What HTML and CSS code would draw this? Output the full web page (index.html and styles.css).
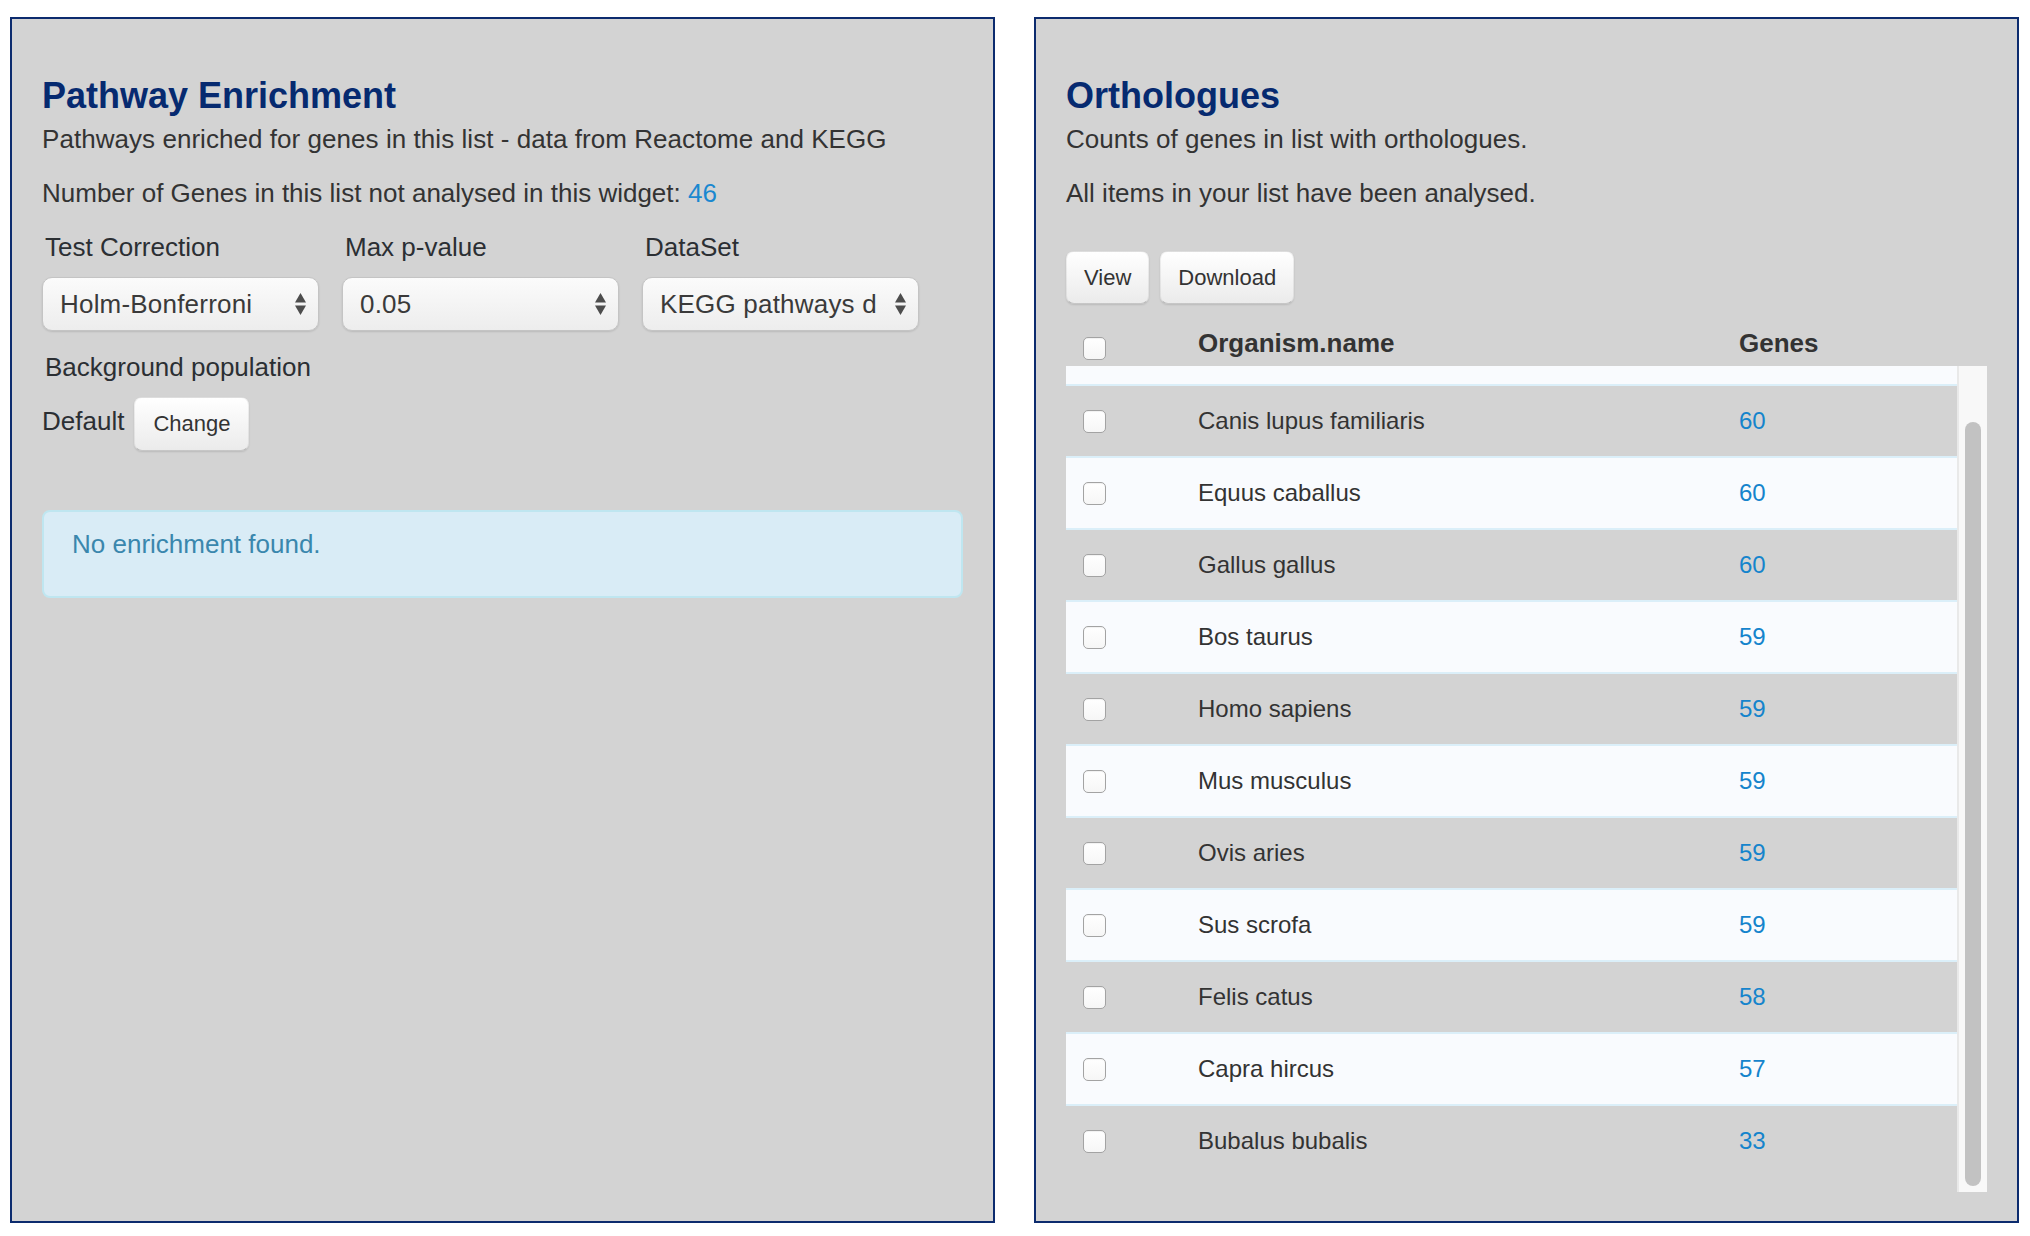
FILE: index.html
```html
<!DOCTYPE html>
<html lang="en">
<head>
<meta charset="utf-8">
<title>Widgets</title>
<link rel="stylesheet" href="styles.css">
</head>
<body>
<div class="page">
  <section class="panel">
    <h2 class="title">Pathway Enrichment</h2>
    <p class="desc">Pathways enriched for genes in this list - data from Reactome and KEGG</p>
    <p class="note">Number of Genes in this list not analysed in this widget: <a class="link" href="#">46</a></p>
    <div class="controls">
      <label class="ctl-label">Test Correction</label>
      <label class="ctl-label">Max p-value</label>
      <label class="ctl-label">DataSet</label>
      <div class="select"><span class="select-text">Holm-Bonferroni</span><svg class="arrows" width="11" height="22" viewBox="0 0 11 22"><polygon points="5.5,0 11,9.5 0,9.5"/><polygon points="0,12.5 11,12.5 5.5,22"/></svg></div>
      <div class="select"><span class="select-text">0.05</span><svg class="arrows" width="11" height="22" viewBox="0 0 11 22"><polygon points="5.5,0 11,9.5 0,9.5"/><polygon points="0,12.5 11,12.5 5.5,22"/></svg></div>
      <div class="select"><span class="select-text">KEGG pathways data set</span><svg class="arrows" width="11" height="22" viewBox="0 0 11 22"><polygon points="5.5,0 11,9.5 0,9.5"/><polygon points="0,12.5 11,12.5 5.5,22"/></svg></div>
    </div>
    <label class="ctl-label bg-label">Background population</label>
    <div class="bg-row">
      <span class="bg-default">Default</span>
      <button class="btn btn-change">Change</button>
    </div>
    <div class="alert">No enrichment found.</div>
  </section>

  <section class="panel">
    <h2 class="title">Orthologues</h2>
    <p class="desc">Counts of genes in list with orthologues.</p>
    <p class="note">All items in your list have been analysed.</p>
    <div class="btn-row">
      <button class="btn">View</button>
      <button class="btn">Download</button>
    </div>
    <div class="thead">
      <span class="cell-check"><span class="checkbox head-check"></span></span>
      <span class="th">Organism.name</span>
      <span class="th">Genes</span>
    </div>
    <div class="scroll">
      <div class="tbody">
        <div class="strip"></div>
        <div class="row"><span class="cell-check"><span class="checkbox"></span></span><span class="td">Canis lupus familiaris</span><a class="td num" href="#">60</a></div>
        <div class="row alt"><span class="cell-check"><span class="checkbox"></span></span><span class="td">Equus caballus</span><a class="td num" href="#">60</a></div>
        <div class="row"><span class="cell-check"><span class="checkbox"></span></span><span class="td">Gallus gallus</span><a class="td num" href="#">60</a></div>
        <div class="row alt"><span class="cell-check"><span class="checkbox"></span></span><span class="td">Bos taurus</span><a class="td num" href="#">59</a></div>
        <div class="row"><span class="cell-check"><span class="checkbox"></span></span><span class="td">Homo sapiens</span><a class="td num" href="#">59</a></div>
        <div class="row alt"><span class="cell-check"><span class="checkbox"></span></span><span class="td">Mus musculus</span><a class="td num" href="#">59</a></div>
        <div class="row"><span class="cell-check"><span class="checkbox"></span></span><span class="td">Ovis aries</span><a class="td num" href="#">59</a></div>
        <div class="row alt"><span class="cell-check"><span class="checkbox"></span></span><span class="td">Sus scrofa</span><a class="td num" href="#">59</a></div>
        <div class="row"><span class="cell-check"><span class="checkbox"></span></span><span class="td">Felis catus</span><a class="td num" href="#">58</a></div>
        <div class="row alt"><span class="cell-check"><span class="checkbox"></span></span><span class="td">Capra hircus</span><a class="td num" href="#">57</a></div>
        <div class="row"><span class="cell-check"><span class="checkbox"></span></span><span class="td">Bubalus bubalis</span><a class="td num" href="#">33</a></div>
      </div>
      <div class="scrollbar"><div class="thumb"></div></div>
    </div>
  </section>
</div>
</body>
</html>
```

FILE: styles.css
```css
html, body {
  margin: 0;
  background: #ffffff;
}
body {
  font-family: "Liberation Sans", Arial, Helvetica, sans-serif;
  color: #333333;
}
.page {
  display: flex;
  gap: 39px;
  padding: 17px 11px 13px 10px;
}
.panel {
  flex: 1 1 0;
  min-width: 0;
  height: 1206px;
  box-sizing: border-box;
  border: 2px solid #0c2b6e;
  background: #d3d3d3;
  padding: 57px 30px 0;
  display: flex;
  flex-direction: column;
}
.title {
  margin: 0;
  font-size: 36px;
  line-height: 40px;
  font-weight: bold;
  color: #062a70;
}
.desc, .note {
  margin: 5px 0 0;
  font-size: 26px;
  line-height: 36px;
  color: #333333;
}
.desc {
  letter-spacing: 0.05px;
}
.note {
  margin-top: 18px;
}
.link {
  color: #1a88d0;
  text-decoration: none;
}
.controls {
  margin-top: 19px;
  display: grid;
  grid-template-columns: 277px 277px 277px;
  column-gap: 23px;
  row-gap: 13px;
}
.ctl-label {
  display: block;
  font-size: 26px;
  line-height: 34px;
  padding-left: 3px;
  color: #2b2f33;
}
.select {
  height: 54px;
  box-sizing: border-box;
  border: 1px solid #c4c4c4;
  border-radius: 10px;
  background: linear-gradient(#fbfbfb, #ededed);
  box-shadow: 0 1px 2px rgba(0, 0, 0, 0.12);
  display: flex;
  align-items: center;
  padding: 0 12px 0 17px;
}
.select-text {
  flex: 1 1 auto;
  min-width: 0;
  overflow: hidden;
  white-space: nowrap;
  font-size: 26px;
  letter-spacing: 0.2px;
  color: #3a3a3a;
  margin-right: 19px;
}
.arrows {
  flex: none;
  fill: #4d4d4d;
}
.bg-label {
  margin-top: 19px;
}
.bg-row {
  margin-top: 13px;
  display: flex;
  align-items: center;
  gap: 10px;
}
.bg-default {
  font-size: 26px;
  margin-bottom: 6px;
  color: #2b2f33;
}
.btn {
  height: 53px;
  box-sizing: border-box;
  padding: 0 17px;
  font-family: "Liberation Sans", Arial, Helvetica, sans-serif;
  font-size: 22px;
  color: #333333;
  background: linear-gradient(#ffffff, #ebebeb);
  border: 1px solid rgba(0, 0, 0, 0.06);
  border-bottom-color: rgba(0, 0, 0, 0.22);
  border-radius: 8px;
  box-shadow: 0 1px 2px rgba(0, 0, 0, 0.12);
}
.btn-change {
  height: 54px;
  padding: 0 18px;
}
.alert {
  margin-top: 59px;
  border: 2px solid #bfe6f0;
  border-radius: 8px;
  background: #d9ecf6;
  color: #3a87ad;
  font-size: 26px;
  line-height: 36px;
  padding: 14px 28px 34px;
}
.btn-row {
  margin-top: 40px;
  display: flex;
  gap: 11px;
}
.thead, .row {
  display: grid;
  grid-template-columns: 132px 541px 1fr;
  align-items: center;
}
.thead {
  margin-top: 16px;
  height: 46px;
}
.th {
  font-size: 26px;
  font-weight: bold;
  color: #333333;
}
.cell-check {
  padding-left: 17px;
  display: flex;
}
.checkbox {
  width: 23px;
  height: 23px;
  box-sizing: border-box;
  border: 1px solid #a3a3a3;
  border-radius: 5px;
  background: linear-gradient(#ffffff, #f6f6f6);
  box-shadow: inset 0 1px 1px rgba(0, 0, 0, 0.06);
}
.head-check {
  margin-top: 10px;
}
.scroll {
  height: 826px;
  display: flex;
}
.tbody {
  flex: 1 1 auto;
  min-width: 0;
}
.strip {
  height: 18px;
  background: #f9fbfe;
}
.row {
  height: 72px;
  box-sizing: border-box;
  border-top: 2px solid #dbeff9;
}
.row.alt {
  background: #f9fbfe;
}
.td {
  font-size: 24px;
  color: #333333;
}
.num {
  color: #1584cc;
  text-decoration: none;
}
.scrollbar {
  flex: none;
  width: 30px;
  box-sizing: border-box;
  background: #f8f8f8;
  border-left: 2px solid #e9e9e9;
  padding: 56px 6px 6px 6px;
  display: flex;
}
.thumb {
  flex: 1;
  border-radius: 8px;
  background: #c2c2c2;
}
```
